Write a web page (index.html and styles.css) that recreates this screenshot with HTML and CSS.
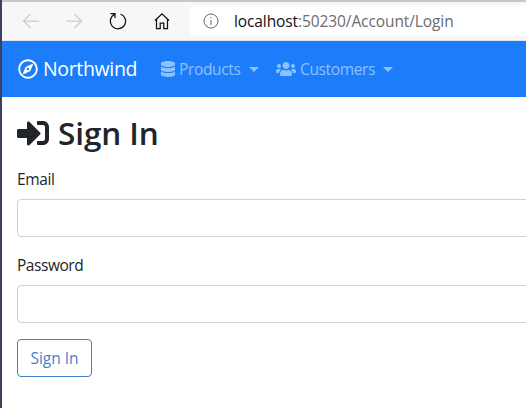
FILE: index.html
```html
<!DOCTYPE html>
<html lang="en">
<head>
<meta charset="utf-8">
<title>Sign In</title>
<link rel="stylesheet" href="styles.css">
</head>
<body>
<div class="window">
  <header class="toolbar">
    <svg class="tool back" viewBox="0 0 18 18"><path d="M17 9H1.500M8.500 2L1.500 9l7 7"/></svg>
    <svg class="tool forward" viewBox="0 0 18 18"><path d="M1 9h15.500M9.500 2l7 7-7 7"/></svg>
    <svg class="tool reload" viewBox="0 0 18 18"><path d="M11.500 2a7.600 7.600 0 1 1-6.200.5M1.500 1.500h4.500V6"/></svg>
    <svg class="tool home" viewBox="0 0 18 18"><path d="M2 8.500L9 1.800l7 6.700M3.500 7.500v9h3.700v-5.500h3.600v5.500h3.700v-9"/></svg>
    <div class="address">
      <svg class="info" viewBox="0 0 16 16"><circle cx="8" cy="8" r="7"/><path d="M8 7v5M8 4v1.300"/></svg>
      <span class="url"><span class="host">localhost</span>:50230/Account/Login</span>
    </div>
  </header>
  <nav class="navbar">
    <a class="brand"><svg class="compass" viewBox="0 0 496 512"><path d="M347.940 129.860L203.600 195.830a31.938 31.938 0 0 0-15.770 15.770l-65.970 144.340c-7.610 16.650 9.540 33.810 26.200 26.200l144.340-65.970a31.938 31.938 0 0 0 15.770-15.770l65.970-144.340c7.610-16.660-9.540-33.810-26.200-26.200zm-77.360 148.720c-12.470 12.470-32.690 12.470-45.160 0-12.470-12.470-12.470-32.690 0-45.160 12.470-12.470 32.690-12.470 45.160 0 12.470 12.470 12.470 32.690 0 45.160zM248 8C111.030 8 0 119.030 0 256s111.030 248 248 248 248-111.030 248-248S384.970 8 248 8zm0 448c-110.280 0-200-89.720-200-200S137.720 56 248 56s200 89.720 200 200-89.720 200-200 200z"/></svg><span class="brand-name">Northwind</span></a>
    <a class="menu products"><svg class="database" viewBox="0 0 448 512"><path d="M448 73.143v45.714C448 159.143 347.667 192 224 192S0 159.143 0 118.857V73.143C0 32.857 100.333 0 224 0s224 32.857 224 73.143zM448 176v102.857C448 319.143 347.667 352 224 352S0 319.143 0 278.857V176c48.125 33.143 136.208 48.572 224 48.572S399.874 209.143 448 176zm0 160v102.857C448 479.143 347.667 512 224 512S0 479.143 0 438.857V336c48.125 33.143 136.208 48.572 224 48.572S399.874 369.143 448 336z"/></svg><span class="menu-text">Products</span><i class="caret"></i></a>
    <a class="menu customers"><svg class="users" viewBox="0 0 640 512"><path d="M96 224c35.300 0 64-28.700 64-64s-28.700-64-64-64-64 28.700-64 64 28.700 64 64 64zm448 0c35.300 0 64-28.700 64-64s-28.700-64-64-64-64 28.700-64 64 28.700 64 64 64zm32 32h-64c-17.600 0-33.500 7.100-45.100 18.600 40.300 22.100 68.900 62 75.100 109.400h66c17.700 0 32-14.300 32-32v-32c0-35.300-28.700-64-64-64zm-256 0c61.900 0 112-50.100 112-112S381.900 32 320 32 208 82.100 208 144s50.100 112 112 112zm76.800 32h-8.300c-20.800 10-43.900 16-68.500 16s-47.600-6-68.500-16h-8.300C179.600 288 128 339.600 128 403.200V432c0 26.500 21.500 48 48 48h288c26.500 0 48-21.500 48-48v-28.800c0-63.600-51.600-115.200-115.200-115.200zm-223.700-13.400C161.500 263.100 145.600 256 128 256H64c-35.300 0-64 28.700-64 64v32c0 17.700 14.300 32 32 32h65.900c6.300-47.400 34.900-87.300 75.200-109.400z"/></svg><span class="menu-text">Customers</span><i class="caret"></i></a>
  </nav>
  <main class="content">
    <h1 class="title"><svg class="signin" viewBox="0 0 512 512"><path d="M416 448h-84c-6.600 0-12-5.400-12-12v-40c0-6.600 5.400-12 12-12h84c17.700 0 32-14.300 32-32V160c0-17.700-14.300-32-32-32h-84c-6.600 0-12-5.400-12-12V76c0-6.600 5.400-12 12-12h84c53 0 96 43 96 96v192c0 53-43 96-96 96zm-47-201L201 79c-15-15-41-4.500-41 17v96H24c-13.300 0-24 10.700-24 24v96c0 13.300 10.700 24 24 24h136v96c0 21.500 26 32 41 17l168-168c9.300-9.400 9.300-24.600 0-34z"/></svg><span>Sign In</span></h1>
    <form>
      <label class="label" for="email">Email</label>
      <input class="field" id="email" type="text">
      <label class="label password-label" for="password">Password</label>
      <input class="field" id="password" type="password">
      <button class="submit" type="button">Sign In</button>
    </form>
  </main>
</div>
</body>
</html>
```
FILE: styles.css
```css
* { box-sizing: border-box; }
body {
  margin: 0;
  height: 408px;
  overflow: hidden;
  background: #fff;
  color: #212529;
  font-family: "Open Sans", "Noto Sans", sans-serif;
  font-size: 15.5px;
  letter-spacing: -0.35px;
}
svg { display: block; flex: none; fill: currentColor; }
.window { height: 408px; border-left: 2px solid #3a4060; overflow: hidden; }
.toolbar {
  display: flex;
  align-items: center;
  height: 41px;
  border-top: 2px solid #c8c8c8;
  border-bottom: 1px solid #dfe4ee;
  background: #f7f7f7;
}
.tool { width: 18px; height: 18px; margin-top: -1px; fill: none; stroke: #111; stroke-width: 1.25; }
.back { margin-left: 20px; stroke: #ccc; }
.forward { margin-left: 25px; stroke: #ccc; }
.reload { margin-left: 26px; }
.home { margin-left: 26px; }
.address {
  display: flex;
  align-items: center;
  flex: 1;
  height: 30px;
  margin-left: 19px;
  padding-left: 13px;
  background: #fff;
  border-radius: 4px 0 0 4px;
}
.info { width: 16px; height: 16px; margin-top: -1px; fill: none; stroke: #666; stroke-width: 1; }
.url { margin-left: 15px; color: #6d6d6d; white-space: nowrap; letter-spacing: -0.1px; }
.host { color: #111; }
.navbar {
  display: flex;
  align-items: center;
  height: 56px;
  padding-left: 16px;
  background: #1c7dfa;
}
.brand { display: flex; align-items: center; width: 143px; color: #fff; }
.compass { width: 20px; height: 20px; }
.brand-name { margin-left: 5px; font-size: 19.5px; line-height: 28px; }
.menu { display: flex; align-items: center; color: #8fc0ff; white-space: nowrap; }
.products { width: 115px; }
.database { width: 14px; height: 16px; }
.users { width: 20px; height: 16px; }
.menu-text { margin-left: 4px; }
.caret { margin-left: 8px; border: 5px solid transparent; border-top-color: currentColor; border-bottom: 0; }
.content { padding: 16px 0 0 15px; }
.title {
  display: flex;
  align-items: center;
  gap: 9px;
  height: 40px;
  margin: 0 0 14px;
  font-size: 31.5px;
  font-weight: 600;
  line-height: 40px;
  letter-spacing: -0.1px;
}
.signin { width: 32px; height: 32px; }
.label { display: block; height: 24px; margin-bottom: 8px; line-height: 24px; }
.password-label { margin-top: 16px; letter-spacing: -0.45px; }
.field {
  display: block;
  width: 540px;
  height: 38px;
  border: 1px solid #ced0d2;
  border-radius: 4px;
  background: #fff;
}
.submit {
  display: block;
  width: 75px;
  height: 38px;
  margin-top: 16px;
  padding: 0;
  border: 1px solid #3f7fce;
  border-radius: 4px;
  background: #fff;
  color: #477fd0;
  font: inherit;
  letter-spacing: 0;
}
```
